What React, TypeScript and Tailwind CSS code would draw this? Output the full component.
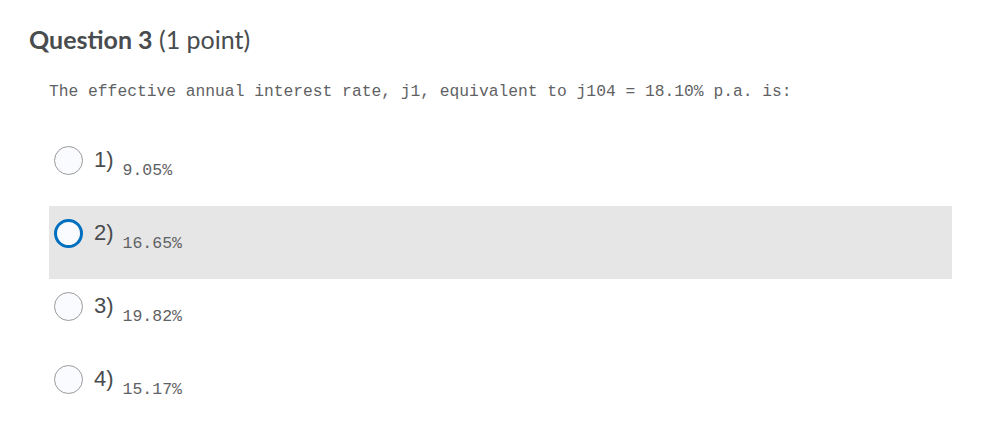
import React from "react";

const options = [
  { n: "1)", v: "9.05%", active: false },
  { n: "2)", v: "16.65%", active: true },
  { n: "3)", v: "19.82%", active: false },
  { n: "4)", v: "15.17%", active: false },
];

export default function App() {
  return (
    <div className="w-[1008px] h-[438px] bg-white overflow-hidden">
      <div className="pl-[29px] pt-[24px]">
        <h2 className="text-[25px] leading-[30px] text-[#494c4e] font-['Lato',sans-serif]">
          <span className="font-bold">Question 3</span>
          <span className="font-normal"> (1 point)</span>
        </h2>
      </div>

      <div className="pl-[49px] pr-[56px]">
        <p className="mt-[28px] h-[20px] leading-[20px] text-[16.3px] text-[#5f6264] font-['Liberation_Mono',monospace]">
          The effective annual interest rate, j1, equivalent to j104 = 18.10% p.a. is:
        </p>

        <div className="mt-[31px] flex flex-col">
          {options.map((o) => (
            <div
              key={o.n}
              className={`h-[73px] flex items-start pl-[5px] pt-[13px] ${o.active ? "bg-[#e6e6e6]" : ""}`}
            >
              <span
                className={`w-[29px] h-[29px] rounded-full bg-[#f9fbff] shrink-0 ${
                  o.active ? "border-[3px] border-[#006fbf]" : "border border-[#9a9a9a]"
                }`}
              />
              <span className="ml-[11px] mt-[2px] text-[22px] leading-[24px] text-[#494c4e] font-['Liberation_Sans',sans-serif]">
                {o.n}
              </span>
              <span className="ml-[9px] mt-[15px] text-[16.5px] leading-[20px] text-[#5f6264] font-['Liberation_Mono',monospace]">
                {o.v}
              </span>
            </div>
          ))}
        </div>
      </div>
    </div>
  );
}
